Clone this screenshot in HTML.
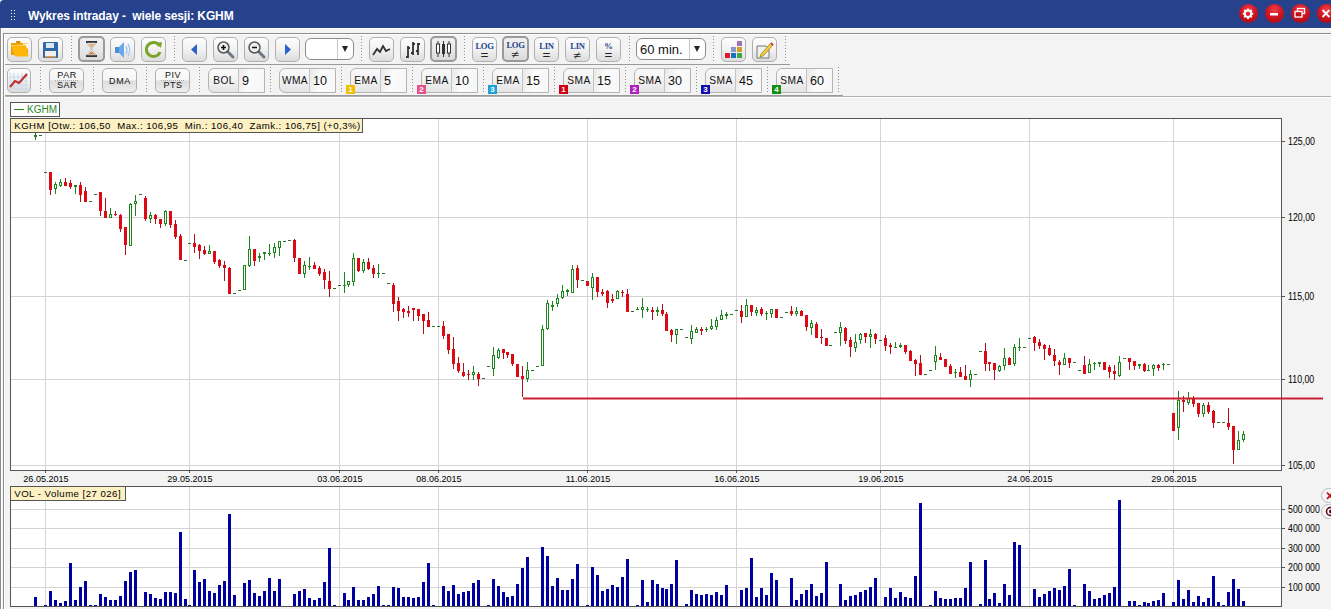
<!DOCTYPE html><html><head><meta charset="utf-8"><title>Wykres intraday</title><style>
*{margin:0;padding:0;box-sizing:border-box}
html,body{width:1331px;height:609px;overflow:hidden;background:#f3f3f3;font-family:"Liberation Sans",sans-serif}
#root{position:relative;width:1331px;height:609px;overflow:hidden;background:#f3f3f3}
.abs{position:absolute}
#title{position:absolute;left:0;top:0;width:1331px;height:28px;background:#26428c;border-top-left-radius:4px}
#corner{position:absolute;left:0;top:0;width:6px;height:6px;background:#eef}
#title .tt{position:absolute;left:28px;top:8.5px;font-size:12px;line-height:14px;font-weight:bold;color:#fff;white-space:pre;letter-spacing:-0.12px}
.grip{position:absolute;width:1px;height:1px;background:#fff}
.wb{position:absolute;top:4.2px;width:19px;height:19px;border-radius:50%;background:radial-gradient(circle at 50% 30%,#f04048 0%,#d01622 45%,#b00c18 80%,#d83848 92%,#e86070 100%)}
.wbi{position:absolute;left:0;top:0}
.hl{position:absolute;height:1px}
.vl{position:absolute;width:1px}
.btn{position:absolute;border:1px solid #b0b0b0;border-radius:5px;background:linear-gradient(#fdfdfd,#f3f3f3 45%,#dcdcdc);overflow:hidden}
.btn svg{position:absolute;left:-1px;top:-1px}
.dots{position:absolute;left:5px;right:5px;top:11px;height:1px;background:repeating-linear-gradient(90deg,#aaa 0 1px,transparent 1px 2px)}
.btn.b2{background:linear-gradient(#fbfbfb,#f6f6f6 48%,#dcdcdc 52%,#e4e4e4 75%,#ededed)}
.btn.pressed{border:2px solid #9a9a9a;background:linear-gradient(#f0f0f0,#e8e8e8 50%,#dadada)}
.btn.pressed svg{left:-2px;top:-2px}
.sep{position:absolute;width:1px;background:repeating-linear-gradient(#909090 0 1px,transparent 1px 3px)}
.dd{position:absolute;top:38px;height:22px;border:1px solid #8c8c8c;border-radius:6px;background:#fff}
.ddv{position:absolute;top:0;width:1px;height:20px;background:#c8c8c8}
.dda{position:absolute;top:7px;width:0;height:0;border-left:3.5px solid transparent;border-right:3.5px solid transparent;border-top:6.5px solid #222}
.ddt{position:absolute;left:3px;top:3px;font-size:13px;color:#111}
.lt{position:absolute;left:0;width:100%;top:3px;text-align:center;font-family:"Liberation Serif",serif;font-size:8.6px;line-height:10px;font-weight:bold;color:#22448e;letter-spacing:-0.3px}
.lb{position:absolute;left:0;width:100%;top:10.5px;text-align:center;font-size:13.5px;line-height:14px;color:#222;transform:scaleY(0.8)}
.pressed .lt{top:2px}.pressed .lb{top:9.5px}
.t2{position:absolute;left:0.5px;width:100%;top:1px;text-align:center;font-size:9px;line-height:10.3px;color:#111;letter-spacing:0.5px}
.t1{position:absolute;left:0.5px;width:100%;top:7px;text-align:center;font-size:9px;line-height:11px;color:#111;letter-spacing:0.6px}
.grp{position:absolute;top:68px;width:57px;height:25px;border:1px solid #b4b4b4;border-radius:6px 0 0 6px;background:linear-gradient(#fafafa,#f1f1f1 50%,#e4e4e4);overflow:hidden}
.gl{position:absolute;left:0;top:0;width:30px;height:23px;border-right:1px solid #c4c4c4;text-align:center;font-size:10.2px;line-height:24px;color:#111;letter-spacing:0.4px;padding-left:1px}
.gv{position:absolute;left:30px;top:0;width:26px;height:23px;background:linear-gradient(100deg,#e8e8e8,#fbfbfb 40%,#f6f6f6);font-size:12.6px;line-height:24px;padding-left:3px;color:#111}
.badge{position:absolute;top:85px;width:9px;height:9px;color:#fff;font-size:8px;line-height:9px;text-align:center;font-weight:bold}
.yl{position:absolute;left:1287.5px;font-size:10px;line-height:12px;color:#000;white-space:pre;transform:scaleX(0.88);transform-origin:0 0}
.xl{position:absolute;top:472.8px;width:80px;text-align:center;font-size:9.8px;line-height:12px;color:#000;transform:scaleX(0.925)}
.tip{position:absolute;background:#fdf1c4;border:1px solid #555;font-size:9.6px;line-height:12px;color:#000;white-space:pre;padding-left:3.3px;padding-top:1px;letter-spacing:0.48px}
#legend{position:absolute;left:10px;top:102px;width:50px;height:15px;border:1px solid #555;background:#fff;font-size:10px;line-height:13px;color:#1f8a1f;white-space:pre}
</style></head><body><div id="root">
<div id="corner"></div><div id="title"><span class="tt">Wykres intraday -  wiele sesji: KGHM</span></div>
<div class="grip" style="left:11px;top:10px"></div>
<div class="grip" style="left:11px;top:13px"></div>
<div class="grip" style="left:11px;top:16px"></div>
<div class="grip" style="left:11px;top:19px"></div>
<div class="grip" style="left:14px;top:10px"></div>
<div class="grip" style="left:14px;top:13px"></div>
<div class="grip" style="left:14px;top:16px"></div>
<div class="grip" style="left:14px;top:19px"></div>
<div class="wb" style="left:1238.5px"></div>
<div class="wb" style="left:1264.5px"></div>
<div class="wb" style="left:1290.5px"></div>
<div class="wb" style="left:1316.5px"></div>
<svg class="wbi" width="1331" height="28" viewBox="0 0 1331 28"><path d="M1250.5 13.7 L1253.2 13.7 M1249.8 15.5 L1251.7 17.4 M1248.0 16.2 L1248.0 18.9 M1246.2 15.5 L1244.3 17.4 M1245.5 13.7 L1242.8 13.7 M1246.2 11.9 L1244.3 10.0 M1248.0 11.2 L1248.0 8.5 M1249.8 11.9 L1251.7 10.0" stroke="#fff" stroke-width="2"/><circle cx="1248" cy="13.7" r="3.2" fill="none" stroke="#fff" stroke-width="1.8"/><rect x="1270" y="13" width="8" height="2.5" fill="#fff"/><rect x="1297.5" y="8.5" width="7" height="5" fill="none" stroke="#fff" stroke-width="1.3"/><rect x="1295" y="11.5" width="7" height="5.5" fill="#c0101a" stroke="#fff" stroke-width="1.3"/><path d="M1322.5 10 L1329.5 17 M1329.5 10 L1322.5 17" stroke="#fff" stroke-width="1.8"/></svg>
<div class="hl" style="left:0;top:28px;width:1331px;background:#fff"></div>
<div class="vl" style="left:0;top:28px;height:581px;background:#8c8c8c"></div>
<div class="vl" style="left:1px;top:29px;height:580px;background:#fff"></div>
<div class="hl" style="left:3px;top:33px;width:1328px;background:#8e8e8e"></div>
<div class="hl" style="left:4px;top:34px;width:1327px;background:#fff"></div>
<div class="hl" style="left:3px;top:64px;width:787px;background:#9a9a9a"></div>
<div class="hl" style="left:3px;top:95px;width:840px;background:#9a9a9a"></div>
<div class="hl" style="left:3px;top:96px;width:1328px;background:#b0b0b0"></div>
<div class="hl" style="left:4px;top:97px;width:1327px;background:#fff"></div>
<div class="vl" style="left:3px;top:33px;height:576px;background:#909090"></div>
<div class="vl" style="left:4px;top:34px;height:575px;background:#fff"></div>
<div class="btn" style="left:7px;top:37px;width:25px;height:25px"><svg width="25" height="25" viewBox="0 0 25 25"><rect x="9" y="4" width="4.5" height="2" rx="0.8" fill="#d98a00"/><path d="M4 6 h17 v12 h-17z" fill="#eea000"/><path d="M16 6.5 h5 v5 h-5z" fill="#fff"/><path d="M4 8.5 L19 8 L21.5 19.5 L8 19.5z" fill="#ffb60a"/><path d="M4 8.5 L19 8" stroke="#ffd460" stroke-width="1"/></svg></div>
<div class="btn" style="left:38px;top:37px;width:25px;height:25px"><svg width="25" height="25" viewBox="0 0 25 25"><rect x="5" y="5" width="15" height="16" rx="1" fill="#2f6aa8"/><rect x="8" y="6" width="8" height="5" fill="#dfe6ee"/><rect x="7" y="14" width="11" height="6" fill="#f1efe8"/><rect x="7" y="19" width="11" height="1.5" fill="#e39a52"/></svg></div>
<div class="sep" style="left:71px;top:36px;height:27px"></div>
<div class="btn pressed" style="left:78px;top:36px;width:27px;height:26px"><svg width="27" height="26" viewBox="0 0 27 26"><rect x="8" y="5" width="11" height="2" fill="#333"/><rect x="8" y="19" width="11" height="2" fill="#333"/><path d="M9 7 L18 7 L13.5 13 L18 19 L9 19 L13.5 13z" fill="#fafafa" stroke="#9aa" stroke-width="0.7"/><path d="M10 8 L17 8 L13.5 12z" fill="#e8b07a"/><path d="M10 18.5 L17 18.5 L13.5 15z" fill="#d9874a"/></svg></div>
<div class="btn" style="left:110px;top:37px;width:25px;height:25px"><svg width="25" height="25" viewBox="0 0 25 25"><rect x="5" y="10" width="4" height="6" fill="#4a8fd6"/><path d="M9 10 L14 5 L14 21 L9 16z" fill="#6aa8e8"/><path d="M16 9 q2 4 0 8 M18 7 q3.5 6 0 12" fill="none" stroke="#9cc6ee" stroke-width="1.2"/></svg></div>
<div class="btn" style="left:141px;top:37px;width:25px;height:25px"><svg width="25" height="25" viewBox="0 0 25 25"><path d="M18.5 9 A7 7 0 1 0 19 15" fill="none" stroke="#7aa52a" stroke-width="3"/><path d="M15 6 L21 5 L20 11z" fill="#7aa52a"/></svg></div>
<div class="sep" style="left:174px;top:36px;height:27px"></div>
<div class="btn" style="left:182px;top:37px;width:25px;height:25px"><svg width="25" height="25" viewBox="0 0 25 25"><path d="M15 7 L9 12.5 L15 18z" fill="#2a62c8"/></svg></div>
<div class="btn" style="left:213px;top:37px;width:25px;height:25px"><svg width="25" height="25" viewBox="0 0 25 25"><path d="M14 14 L20 20" stroke="#6d7a85" stroke-width="3" stroke-linecap="round"/><circle cx="10.5" cy="10.5" r="5.5" fill="#eee" stroke="#555" stroke-width="1.5"/><path d="M8 10.5 h5 M10.5 8 v5" stroke="#111" stroke-width="1.6"/></svg></div>
<div class="btn" style="left:244px;top:37px;width:25px;height:25px"><svg width="25" height="25" viewBox="0 0 25 25"><path d="M14 14 L20 20" stroke="#6d7a85" stroke-width="3" stroke-linecap="round"/><circle cx="10.5" cy="10.5" r="5.5" fill="#eee" stroke="#555" stroke-width="1.5"/><path d="M8 10.5 h5" stroke="#111" stroke-width="1.6"/></svg></div>
<div class="btn" style="left:275px;top:37px;width:25px;height:25px"><svg width="25" height="25" viewBox="0 0 25 25"><path d="M10 7 L16 12.5 L10 18z" fill="#2a62c8"/></svg></div>
<div class="dd" style="left:305px;width:49px"><div class="ddv" style="left:31px"></div><div class="dda" style="left:36px"></div></div>
<div class="sep" style="left:361px;top:36px;height:27px"></div>
<div class="btn" style="left:369px;top:37px;width:25px;height:25px"><svg width="25" height="25" viewBox="0 0 25 25"><path d="M4 18 L8 12 L11 15 L14 9 L17 14 L21 12" fill="none" stroke="#333" stroke-width="1.8"/></svg></div>
<div class="btn" style="left:400px;top:37px;width:25px;height:25px"><svg width="25" height="25" viewBox="0 0 25 25"><path d="M8 9 v12 M6 20 h2 M8 11 h2 M13 5 v13 M11 16 h2 M13 7 h2 M18 6 v12 M16 14 h2 M18 7 h2" fill="none" stroke="#333" stroke-width="1.8"/></svg></div>
<div class="btn pressed" style="left:430px;top:36px;width:27px;height:26px"><svg width="27" height="26" viewBox="0 0 27 26"><path d="M8 5 v16 M13.5 5 v16 M19 5 v16" stroke="#333" stroke-width="1"/><rect x="6.5" y="8" width="3" height="9" fill="#fff" stroke="#333" stroke-width="1"/><rect x="12" y="8" width="3" height="10" fill="#333"/><rect x="17.5" y="8" width="3" height="9" fill="#fff" stroke="#333" stroke-width="1"/></svg></div>
<div class="sep" style="left:464px;top:36px;height:27px"></div>
<div class="btn" style="left:472px;top:37px;width:25px;height:25px"><div class="lt">LOG</div><div class="lb">=</div></div>
<div class="btn pressed" style="left:502px;top:36px;width:27px;height:26px"><div class="lt">LOG</div><div class="lb">&#8800;</div></div>
<div class="btn" style="left:534px;top:37px;width:25px;height:25px"><div class="lt">LIN</div><div class="lb">=</div></div>
<div class="btn" style="left:565px;top:37px;width:25px;height:25px"><div class="lt">LIN</div><div class="lb">&#8800;</div></div>
<div class="btn" style="left:596px;top:37px;width:25px;height:25px"><div class="lt">%</div><div class="lb">=</div></div>
<div class="sep" style="left:629px;top:36px;height:27px"></div>
<div class="dd" style="left:636px;width:70px"><span class="ddt">60 min.</span><div class="ddv" style="left:52px"></div><div class="dda" style="left:57px"></div></div>
<div class="sep" style="left:713px;top:36px;height:27px"></div>
<div class="btn" style="left:721px;top:37px;width:25px;height:25px"><svg width="25" height="25" viewBox="0 0 25 25"><rect x="16" y="4" width="5" height="5" fill="#a070b8"/><rect x="10" y="10" width="5" height="5" fill="#8898cc"/><rect x="16" y="10" width="5" height="5" fill="#d0a020"/><rect x="4" y="16" width="5" height="5" fill="#e01828"/><rect x="10" y="16" width="5" height="5" fill="#1a70c0"/><rect x="16" y="16" width="5" height="5" fill="#38a848"/></svg></div>
<div class="btn" style="left:752px;top:37px;width:25px;height:25px"><svg width="25" height="25" viewBox="0 0 25 25"><path d="M5 9 h9 l3 3 v9 h-12z" fill="#f0f0f0" stroke="#777" stroke-width="1"/><path d="M9 17 L19 6 L21 8 L11 19 L8 20z" fill="#f2d23a" stroke="#9a7a10" stroke-width="0.8"/><path d="M19 6 L21 8" stroke="#d04040" stroke-width="2"/></svg></div>
<div class="sep" style="left:785px;top:36px;height:27px"></div>
<div class="btn" style="left:7px;top:68px;width:24px;height:25px"><svg width="24" height="25" viewBox="0 0 24 25"><g stroke="#c8d8e8" stroke-width="1"><path d="M3 5 v17 M7 5 v17 M11 5 v17 M15 5 v17 M19 5 v17 M3 9 h18 M3 13 h18 M3 17 h18 M3 21 h18"/></g><path d="M3 19 L8 13 L12 15 L20 6" fill="none" stroke="#c03030" stroke-width="2.2"/></svg></div>
<div class="sep" style="left:40px;top:67px;height:27px"></div>
<div class="btn b2" style="left:49px;top:68px;width:35px;height:25px"><div class="dots"></div><div class="t2">PAR<br>SAR</div></div>
<div class="sep" style="left:93px;top:67px;height:27px"></div>
<div class="btn b2" style="left:102px;top:68px;width:35px;height:25px"><div class="t1">DMA</div></div>
<div class="sep" style="left:146px;top:67px;height:27px"></div>
<div class="btn b2" style="left:155px;top:68px;width:35px;height:25px"><div class="dots"></div><div class="t2">PIV<br>PTS</div></div>
<div class="sep" style="left:199px;top:67px;height:27px"></div>
<div class="grp" style="left:208px"><div class="gl">BOL</div><div class="gv">9</div></div>
<div class="sep" style="left:270px;top:67px;height:27px"></div>
<div class="grp" style="left:279px"><div class="gl">WMA</div><div class="gv">10</div></div>
<div class="sep" style="left:341px;top:67px;height:27px"></div>
<div class="grp" style="left:350px"><div class="gl">EMA</div><div class="gv">5</div></div>
<div class="badge" style="left:346px;background:#f0c000">1</div>
<div class="sep" style="left:412px;top:67px;height:27px"></div>
<div class="grp" style="left:421px"><div class="gl">EMA</div><div class="gv">10</div></div>
<div class="badge" style="left:417px;background:#e8508a">2</div>
<div class="sep" style="left:483px;top:67px;height:27px"></div>
<div class="grp" style="left:492px"><div class="gl">EMA</div><div class="gv">15</div></div>
<div class="badge" style="left:488px;background:#20a0d8">3</div>
<div class="sep" style="left:554px;top:67px;height:27px"></div>
<div class="grp" style="left:563px"><div class="gl">SMA</div><div class="gv">15</div></div>
<div class="badge" style="left:559px;background:#d00010">1</div>
<div class="sep" style="left:625px;top:67px;height:27px"></div>
<div class="grp" style="left:634px"><div class="gl">SMA</div><div class="gv">30</div></div>
<div class="badge" style="left:630px;background:#b020c0">2</div>
<div class="sep" style="left:696px;top:67px;height:27px"></div>
<div class="grp" style="left:705px"><div class="gl">SMA</div><div class="gv">45</div></div>
<div class="badge" style="left:701px;background:#1010b0">3</div>
<div class="sep" style="left:767px;top:67px;height:27px"></div>
<div class="grp" style="left:776px"><div class="gl">SMA</div><div class="gv">60</div></div>
<div class="badge" style="left:772px;background:#109010">4</div>
<div class="sep" style="left:838px;top:67px;height:27px"></div>
<svg class="abs" style="left:0;top:0" width="1331" height="609" viewBox="0 0 1331 609"><rect x="10.5" y="118.5" width="1271" height="352" fill="#fff" stroke="#555" stroke-width="1"/>
<line x1="45.5" y1="119" x2="45.5" y2="470" stroke="#d4d4d4" stroke-width="1"/>
<line x1="45.5" y1="470" x2="45.5" y2="473" stroke="#555" stroke-width="1"/>
<line x1="189.5" y1="119" x2="189.5" y2="470" stroke="#d4d4d4" stroke-width="1"/>
<line x1="189.5" y1="470" x2="189.5" y2="473" stroke="#555" stroke-width="1"/>
<line x1="339.5" y1="119" x2="339.5" y2="470" stroke="#d4d4d4" stroke-width="1"/>
<line x1="339.5" y1="470" x2="339.5" y2="473" stroke="#555" stroke-width="1"/>
<line x1="438.5" y1="119" x2="438.5" y2="470" stroke="#d4d4d4" stroke-width="1"/>
<line x1="438.5" y1="470" x2="438.5" y2="473" stroke="#555" stroke-width="1"/>
<line x1="587.5" y1="119" x2="587.5" y2="470" stroke="#d4d4d4" stroke-width="1"/>
<line x1="587.5" y1="470" x2="587.5" y2="473" stroke="#555" stroke-width="1"/>
<line x1="736.5" y1="119" x2="736.5" y2="470" stroke="#d4d4d4" stroke-width="1"/>
<line x1="736.5" y1="470" x2="736.5" y2="473" stroke="#555" stroke-width="1"/>
<line x1="880.5" y1="119" x2="880.5" y2="470" stroke="#d4d4d4" stroke-width="1"/>
<line x1="880.5" y1="470" x2="880.5" y2="473" stroke="#555" stroke-width="1"/>
<line x1="1029.5" y1="119" x2="1029.5" y2="470" stroke="#d4d4d4" stroke-width="1"/>
<line x1="1029.5" y1="470" x2="1029.5" y2="473" stroke="#555" stroke-width="1"/>
<line x1="1173.5" y1="119" x2="1173.5" y2="470" stroke="#d4d4d4" stroke-width="1"/>
<line x1="1173.5" y1="470" x2="1173.5" y2="473" stroke="#555" stroke-width="1"/>
<line x1="11" y1="141.5" x2="1281" y2="141.5" stroke="#d4d4d4" stroke-width="1"/>
<line x1="1281" y1="141.5" x2="1285" y2="141.5" stroke="#555" stroke-width="1"/>
<line x1="11" y1="217.5" x2="1281" y2="217.5" stroke="#d4d4d4" stroke-width="1"/>
<line x1="1281" y1="217.5" x2="1285" y2="217.5" stroke="#555" stroke-width="1"/>
<line x1="11" y1="296.5" x2="1281" y2="296.5" stroke="#d4d4d4" stroke-width="1"/>
<line x1="1281" y1="296.5" x2="1285" y2="296.5" stroke="#555" stroke-width="1"/>
<line x1="11" y1="379.5" x2="1281" y2="379.5" stroke="#d4d4d4" stroke-width="1"/>
<line x1="1281" y1="379.5" x2="1285" y2="379.5" stroke="#555" stroke-width="1"/>
<line x1="11" y1="465.5" x2="1281" y2="465.5" stroke="#d4d4d4" stroke-width="1"/>
<line x1="1281" y1="465.5" x2="1285" y2="465.5" stroke="#555" stroke-width="1"/>
<rect x="10.5" y="486.5" width="1271" height="120" fill="#fff" stroke="#555" stroke-width="1"/>
<line x1="45.5" y1="487" x2="45.5" y2="606" stroke="#d4d4d4" stroke-width="1"/>
<line x1="189.5" y1="487" x2="189.5" y2="606" stroke="#d4d4d4" stroke-width="1"/>
<line x1="339.5" y1="487" x2="339.5" y2="606" stroke="#d4d4d4" stroke-width="1"/>
<line x1="438.5" y1="487" x2="438.5" y2="606" stroke="#d4d4d4" stroke-width="1"/>
<line x1="587.5" y1="487" x2="587.5" y2="606" stroke="#d4d4d4" stroke-width="1"/>
<line x1="736.5" y1="487" x2="736.5" y2="606" stroke="#d4d4d4" stroke-width="1"/>
<line x1="880.5" y1="487" x2="880.5" y2="606" stroke="#d4d4d4" stroke-width="1"/>
<line x1="1029.5" y1="487" x2="1029.5" y2="606" stroke="#d4d4d4" stroke-width="1"/>
<line x1="1173.5" y1="487" x2="1173.5" y2="606" stroke="#d4d4d4" stroke-width="1"/>
<line x1="11" y1="587.5" x2="1281" y2="587.5" stroke="#d4d4d4" stroke-width="1"/>
<line x1="1281" y1="587.5" x2="1285" y2="587.5" stroke="#555" stroke-width="1"/>
<line x1="11" y1="567.5" x2="1281" y2="567.5" stroke="#d4d4d4" stroke-width="1"/>
<line x1="1281" y1="567.5" x2="1285" y2="567.5" stroke="#555" stroke-width="1"/>
<line x1="11" y1="548.5" x2="1281" y2="548.5" stroke="#d4d4d4" stroke-width="1"/>
<line x1="1281" y1="548.5" x2="1285" y2="548.5" stroke="#555" stroke-width="1"/>
<line x1="11" y1="528.5" x2="1281" y2="528.5" stroke="#d4d4d4" stroke-width="1"/>
<line x1="1281" y1="528.5" x2="1285" y2="528.5" stroke="#555" stroke-width="1"/>
<line x1="11" y1="509.5" x2="1281" y2="509.5" stroke="#d4d4d4" stroke-width="1"/>
<line x1="1281" y1="509.5" x2="1285" y2="509.5" stroke="#555" stroke-width="1"/>
<g shape-rendering="crispEdges">
<rect x="34" y="597" width="3" height="9" fill="#0000a0"/>
<rect x="44" y="605" width="3" height="1" fill="#0000a0"/>
<rect x="49" y="591" width="3" height="15" fill="#0000a0"/>
<rect x="54" y="600" width="3" height="6" fill="#0000a0"/>
<rect x="59" y="603" width="3" height="3" fill="#0000a0"/>
<rect x="64" y="601" width="3" height="5" fill="#0000a0"/>
<rect x="69" y="563" width="3" height="43" fill="#0000a0"/>
<rect x="74" y="600" width="3" height="6" fill="#0000a0"/>
<rect x="79" y="587" width="3" height="19" fill="#0000a0"/>
<rect x="84" y="581" width="3" height="25" fill="#0000a0"/>
<rect x="89" y="605" width="3" height="1" fill="#0000a0"/>
<rect x="94" y="605" width="3" height="1" fill="#0000a0"/>
<rect x="99" y="594" width="3" height="12" fill="#0000a0"/>
<rect x="104" y="597" width="3" height="9" fill="#0000a0"/>
<rect x="109" y="600" width="3" height="6" fill="#0000a0"/>
<rect x="114" y="600" width="3" height="6" fill="#0000a0"/>
<rect x="119" y="596" width="3" height="10" fill="#0000a0"/>
<rect x="124" y="581" width="3" height="25" fill="#0000a0"/>
<rect x="129" y="572" width="3" height="34" fill="#0000a0"/>
<rect x="134" y="570" width="3" height="36" fill="#0000a0"/>
<rect x="144" y="592" width="3" height="14" fill="#0000a0"/>
<rect x="149" y="594" width="3" height="12" fill="#0000a0"/>
<rect x="154" y="598" width="3" height="8" fill="#0000a0"/>
<rect x="159" y="599" width="3" height="7" fill="#0000a0"/>
<rect x="164" y="592" width="3" height="14" fill="#0000a0"/>
<rect x="169" y="592" width="3" height="14" fill="#0000a0"/>
<rect x="174" y="593" width="3" height="13" fill="#0000a0"/>
<rect x="179" y="532" width="3" height="74" fill="#0000a0"/>
<rect x="184" y="599" width="3" height="7" fill="#0000a0"/>
<rect x="188" y="605" width="3" height="1" fill="#0000a0"/>
<rect x="193" y="570" width="3" height="36" fill="#0000a0"/>
<rect x="198" y="582" width="3" height="24" fill="#0000a0"/>
<rect x="203" y="579" width="3" height="27" fill="#0000a0"/>
<rect x="208" y="591" width="3" height="15" fill="#0000a0"/>
<rect x="213" y="593" width="3" height="13" fill="#0000a0"/>
<rect x="218" y="585" width="3" height="21" fill="#0000a0"/>
<rect x="223" y="581" width="3" height="25" fill="#0000a0"/>
<rect x="228" y="514" width="3" height="92" fill="#0000a0"/>
<rect x="233" y="595" width="3" height="11" fill="#0000a0"/>
<rect x="243" y="583" width="3" height="23" fill="#0000a0"/>
<rect x="248" y="580" width="3" height="26" fill="#0000a0"/>
<rect x="253" y="593" width="3" height="13" fill="#0000a0"/>
<rect x="258" y="596" width="3" height="10" fill="#0000a0"/>
<rect x="263" y="591" width="3" height="15" fill="#0000a0"/>
<rect x="268" y="578" width="3" height="28" fill="#0000a0"/>
<rect x="273" y="591" width="3" height="15" fill="#0000a0"/>
<rect x="278" y="579" width="3" height="27" fill="#0000a0"/>
<rect x="293" y="594" width="3" height="12" fill="#0000a0"/>
<rect x="298" y="591" width="3" height="15" fill="#0000a0"/>
<rect x="303" y="589" width="3" height="17" fill="#0000a0"/>
<rect x="308" y="598" width="3" height="8" fill="#0000a0"/>
<rect x="313" y="600" width="3" height="6" fill="#0000a0"/>
<rect x="318" y="598" width="3" height="8" fill="#0000a0"/>
<rect x="323" y="582" width="3" height="24" fill="#0000a0"/>
<rect x="328" y="548" width="3" height="58" fill="#0000a0"/>
<rect x="333" y="605" width="3" height="1" fill="#0000a0"/>
<rect x="343" y="593" width="3" height="13" fill="#0000a0"/>
<rect x="347" y="600" width="3" height="6" fill="#0000a0"/>
<rect x="352" y="587" width="3" height="19" fill="#0000a0"/>
<rect x="357" y="600" width="3" height="6" fill="#0000a0"/>
<rect x="362" y="600" width="3" height="6" fill="#0000a0"/>
<rect x="367" y="597" width="3" height="9" fill="#0000a0"/>
<rect x="372" y="594" width="3" height="12" fill="#0000a0"/>
<rect x="377" y="586" width="3" height="20" fill="#0000a0"/>
<rect x="382" y="605" width="3" height="1" fill="#0000a0"/>
<rect x="387" y="605" width="3" height="1" fill="#0000a0"/>
<rect x="392" y="587" width="3" height="19" fill="#0000a0"/>
<rect x="397" y="588" width="3" height="18" fill="#0000a0"/>
<rect x="402" y="597" width="3" height="9" fill="#0000a0"/>
<rect x="407" y="597" width="3" height="9" fill="#0000a0"/>
<rect x="412" y="598" width="3" height="8" fill="#0000a0"/>
<rect x="417" y="597" width="3" height="9" fill="#0000a0"/>
<rect x="422" y="582" width="3" height="24" fill="#0000a0"/>
<rect x="427" y="563" width="3" height="43" fill="#0000a0"/>
<rect x="432" y="605" width="3" height="1" fill="#0000a0"/>
<rect x="442" y="586" width="3" height="20" fill="#0000a0"/>
<rect x="447" y="591" width="3" height="15" fill="#0000a0"/>
<rect x="452" y="585" width="3" height="21" fill="#0000a0"/>
<rect x="457" y="594" width="3" height="12" fill="#0000a0"/>
<rect x="462" y="592" width="3" height="14" fill="#0000a0"/>
<rect x="467" y="591" width="3" height="15" fill="#0000a0"/>
<rect x="472" y="583" width="3" height="23" fill="#0000a0"/>
<rect x="477" y="580" width="3" height="26" fill="#0000a0"/>
<rect x="487" y="605" width="3" height="1" fill="#0000a0"/>
<rect x="492" y="579" width="3" height="27" fill="#0000a0"/>
<rect x="497" y="586" width="3" height="20" fill="#0000a0"/>
<rect x="502" y="592" width="3" height="14" fill="#0000a0"/>
<rect x="506" y="597" width="3" height="9" fill="#0000a0"/>
<rect x="511" y="596" width="3" height="10" fill="#0000a0"/>
<rect x="516" y="584" width="3" height="22" fill="#0000a0"/>
<rect x="521" y="568" width="3" height="38" fill="#0000a0"/>
<rect x="526" y="557" width="3" height="49" fill="#0000a0"/>
<rect x="541" y="547" width="3" height="59" fill="#0000a0"/>
<rect x="546" y="556" width="3" height="50" fill="#0000a0"/>
<rect x="551" y="586" width="3" height="20" fill="#0000a0"/>
<rect x="556" y="578" width="3" height="28" fill="#0000a0"/>
<rect x="561" y="590" width="3" height="16" fill="#0000a0"/>
<rect x="566" y="590" width="3" height="16" fill="#0000a0"/>
<rect x="571" y="579" width="3" height="27" fill="#0000a0"/>
<rect x="576" y="564" width="3" height="42" fill="#0000a0"/>
<rect x="586" y="605" width="3" height="1" fill="#0000a0"/>
<rect x="591" y="567" width="3" height="39" fill="#0000a0"/>
<rect x="596" y="575" width="3" height="31" fill="#0000a0"/>
<rect x="601" y="591" width="3" height="15" fill="#0000a0"/>
<rect x="606" y="589" width="3" height="17" fill="#0000a0"/>
<rect x="611" y="585" width="3" height="21" fill="#0000a0"/>
<rect x="616" y="587" width="3" height="19" fill="#0000a0"/>
<rect x="621" y="577" width="3" height="29" fill="#0000a0"/>
<rect x="626" y="559" width="3" height="47" fill="#0000a0"/>
<rect x="636" y="605" width="3" height="1" fill="#0000a0"/>
<rect x="641" y="580" width="3" height="26" fill="#0000a0"/>
<rect x="646" y="602" width="3" height="4" fill="#0000a0"/>
<rect x="651" y="580" width="3" height="26" fill="#0000a0"/>
<rect x="656" y="584" width="3" height="22" fill="#0000a0"/>
<rect x="661" y="588" width="3" height="18" fill="#0000a0"/>
<rect x="665" y="589" width="3" height="17" fill="#0000a0"/>
<rect x="670" y="584" width="3" height="22" fill="#0000a0"/>
<rect x="675" y="560" width="3" height="46" fill="#0000a0"/>
<rect x="685" y="604" width="3" height="2" fill="#0000a0"/>
<rect x="690" y="590" width="3" height="16" fill="#0000a0"/>
<rect x="695" y="594" width="3" height="12" fill="#0000a0"/>
<rect x="700" y="595" width="3" height="11" fill="#0000a0"/>
<rect x="705" y="594" width="3" height="12" fill="#0000a0"/>
<rect x="710" y="595" width="3" height="11" fill="#0000a0"/>
<rect x="715" y="592" width="3" height="14" fill="#0000a0"/>
<rect x="720" y="595" width="3" height="11" fill="#0000a0"/>
<rect x="725" y="585" width="3" height="21" fill="#0000a0"/>
<rect x="740" y="590" width="3" height="16" fill="#0000a0"/>
<rect x="745" y="588" width="3" height="18" fill="#0000a0"/>
<rect x="750" y="558" width="3" height="48" fill="#0000a0"/>
<rect x="755" y="597" width="3" height="9" fill="#0000a0"/>
<rect x="760" y="588" width="3" height="18" fill="#0000a0"/>
<rect x="765" y="595" width="3" height="11" fill="#0000a0"/>
<rect x="770" y="573" width="3" height="33" fill="#0000a0"/>
<rect x="775" y="580" width="3" height="26" fill="#0000a0"/>
<rect x="790" y="578" width="3" height="28" fill="#0000a0"/>
<rect x="795" y="600" width="3" height="6" fill="#0000a0"/>
<rect x="800" y="594" width="3" height="12" fill="#0000a0"/>
<rect x="805" y="590" width="3" height="16" fill="#0000a0"/>
<rect x="810" y="584" width="3" height="22" fill="#0000a0"/>
<rect x="815" y="596" width="3" height="10" fill="#0000a0"/>
<rect x="820" y="593" width="3" height="13" fill="#0000a0"/>
<rect x="825" y="562" width="3" height="44" fill="#0000a0"/>
<rect x="839" y="584" width="3" height="22" fill="#0000a0"/>
<rect x="844" y="600" width="3" height="6" fill="#0000a0"/>
<rect x="849" y="596" width="3" height="10" fill="#0000a0"/>
<rect x="854" y="595" width="3" height="11" fill="#0000a0"/>
<rect x="859" y="592" width="3" height="14" fill="#0000a0"/>
<rect x="864" y="590" width="3" height="16" fill="#0000a0"/>
<rect x="869" y="587" width="3" height="19" fill="#0000a0"/>
<rect x="874" y="578" width="3" height="28" fill="#0000a0"/>
<rect x="884" y="597" width="3" height="9" fill="#0000a0"/>
<rect x="889" y="588" width="3" height="18" fill="#0000a0"/>
<rect x="894" y="598" width="3" height="8" fill="#0000a0"/>
<rect x="899" y="592" width="3" height="14" fill="#0000a0"/>
<rect x="904" y="597" width="3" height="9" fill="#0000a0"/>
<rect x="909" y="598" width="3" height="8" fill="#0000a0"/>
<rect x="914" y="576" width="3" height="30" fill="#0000a0"/>
<rect x="919" y="503" width="3" height="103" fill="#0000a0"/>
<rect x="929" y="605" width="3" height="1" fill="#0000a0"/>
<rect x="934" y="591" width="3" height="15" fill="#0000a0"/>
<rect x="939" y="598" width="3" height="8" fill="#0000a0"/>
<rect x="944" y="599" width="3" height="7" fill="#0000a0"/>
<rect x="949" y="599" width="3" height="7" fill="#0000a0"/>
<rect x="954" y="598" width="3" height="8" fill="#0000a0"/>
<rect x="959" y="598" width="3" height="8" fill="#0000a0"/>
<rect x="964" y="588" width="3" height="18" fill="#0000a0"/>
<rect x="969" y="562" width="3" height="44" fill="#0000a0"/>
<rect x="979" y="604" width="3" height="2" fill="#0000a0"/>
<rect x="984" y="560" width="3" height="46" fill="#0000a0"/>
<rect x="988" y="599" width="3" height="7" fill="#0000a0"/>
<rect x="993" y="593" width="3" height="13" fill="#0000a0"/>
<rect x="998" y="603" width="3" height="3" fill="#0000a0"/>
<rect x="1003" y="584" width="3" height="22" fill="#0000a0"/>
<rect x="1008" y="595" width="3" height="11" fill="#0000a0"/>
<rect x="1013" y="542" width="3" height="64" fill="#0000a0"/>
<rect x="1018" y="545" width="3" height="61" fill="#0000a0"/>
<rect x="1033" y="589" width="3" height="17" fill="#0000a0"/>
<rect x="1038" y="597" width="3" height="9" fill="#0000a0"/>
<rect x="1043" y="594" width="3" height="12" fill="#0000a0"/>
<rect x="1048" y="591" width="3" height="15" fill="#0000a0"/>
<rect x="1053" y="588" width="3" height="18" fill="#0000a0"/>
<rect x="1058" y="590" width="3" height="16" fill="#0000a0"/>
<rect x="1063" y="586" width="3" height="20" fill="#0000a0"/>
<rect x="1068" y="569" width="3" height="37" fill="#0000a0"/>
<rect x="1073" y="605" width="3" height="1" fill="#0000a0"/>
<rect x="1083" y="584" width="3" height="22" fill="#0000a0"/>
<rect x="1088" y="591" width="3" height="15" fill="#0000a0"/>
<rect x="1093" y="599" width="3" height="7" fill="#0000a0"/>
<rect x="1098" y="598" width="3" height="8" fill="#0000a0"/>
<rect x="1103" y="595" width="3" height="11" fill="#0000a0"/>
<rect x="1108" y="593" width="3" height="13" fill="#0000a0"/>
<rect x="1113" y="587" width="3" height="19" fill="#0000a0"/>
<rect x="1118" y="500" width="3" height="106" fill="#0000a0"/>
<rect x="1128" y="601" width="3" height="5" fill="#0000a0"/>
<rect x="1133" y="601" width="3" height="5" fill="#0000a0"/>
<rect x="1138" y="605" width="3" height="1" fill="#0000a0"/>
<rect x="1143" y="602" width="3" height="4" fill="#0000a0"/>
<rect x="1147" y="603" width="3" height="3" fill="#0000a0"/>
<rect x="1152" y="601" width="3" height="5" fill="#0000a0"/>
<rect x="1157" y="600" width="3" height="6" fill="#0000a0"/>
<rect x="1162" y="593" width="3" height="13" fill="#0000a0"/>
<rect x="1172" y="602" width="3" height="4" fill="#0000a0"/>
<rect x="1177" y="580" width="3" height="26" fill="#0000a0"/>
<rect x="1182" y="599" width="3" height="7" fill="#0000a0"/>
<rect x="1187" y="590" width="3" height="16" fill="#0000a0"/>
<rect x="1192" y="602" width="3" height="4" fill="#0000a0"/>
<rect x="1197" y="596" width="3" height="10" fill="#0000a0"/>
<rect x="1202" y="602" width="3" height="4" fill="#0000a0"/>
<rect x="1207" y="598" width="3" height="8" fill="#0000a0"/>
<rect x="1212" y="576" width="3" height="30" fill="#0000a0"/>
<rect x="1217" y="602" width="3" height="4" fill="#0000a0"/>
<rect x="1222" y="605" width="3" height="1" fill="#0000a0"/>
<rect x="1227" y="592" width="3" height="14" fill="#0000a0"/>
<rect x="1232" y="579" width="3" height="27" fill="#0000a0"/>
<rect x="1237" y="589" width="3" height="17" fill="#0000a0"/>
<rect x="1242" y="601" width="3" height="5" fill="#0000a0"/>
<rect x="35" y="132" width="1" height="8" fill="#1e841e"/>
<rect x="34" y="135" width="3" height="2" fill="#1e841e"/>
<rect x="39" y="135" width="3" height="1" fill="#2e6e2e"/>
<rect x="44" y="172" width="3" height="1" fill="#2e6e2e"/>
<rect x="50" y="172" width="1" height="23" fill="#b0101a"/>
<rect x="49" y="172" width="3" height="18" fill="#dc0a14"/>
<rect x="55" y="182" width="1" height="12" fill="#1e841e"/>
<rect x="54.5" y="184.5" width="2" height="4" fill="#fff" stroke="#1e841e" stroke-width="1"/>
<rect x="60" y="179" width="1" height="8" fill="#1e841e"/>
<rect x="59.5" y="182.5" width="2" height="3" fill="#fff" stroke="#1e841e" stroke-width="1"/>
<rect x="65" y="178" width="1" height="8" fill="#b0101a"/>
<rect x="64" y="182" width="3" height="4" fill="#dc0a14"/>
<rect x="70" y="180" width="1" height="9" fill="#b0101a"/>
<rect x="69" y="183" width="3" height="4" fill="#dc0a14"/>
<rect x="75" y="185" width="1" height="9" fill="#1e841e"/>
<rect x="74" y="185" width="3" height="2" fill="#1e841e"/>
<rect x="80" y="182" width="1" height="20" fill="#b0101a"/>
<rect x="79" y="185" width="3" height="10" fill="#dc0a14"/>
<rect x="85" y="187" width="1" height="15" fill="#b0101a"/>
<rect x="84" y="191" width="3" height="11" fill="#dc0a14"/>
<rect x="89" y="201" width="3" height="1" fill="#2e6e2e"/>
<rect x="94" y="194" width="3" height="1" fill="#2e6e2e"/>
<rect x="100" y="192" width="1" height="24" fill="#b0101a"/>
<rect x="99" y="192" width="3" height="19" fill="#dc0a14"/>
<rect x="105" y="198" width="1" height="20" fill="#b0101a"/>
<rect x="104" y="211" width="3" height="7" fill="#dc0a14"/>
<rect x="110" y="208" width="1" height="10" fill="#1e841e"/>
<rect x="109.5" y="214.5" width="2" height="3" fill="#fff" stroke="#1e841e" stroke-width="1"/>
<rect x="115" y="211" width="1" height="5" fill="#b0101a"/>
<rect x="114" y="214" width="3" height="1" fill="#dc0a14"/>
<rect x="120" y="214" width="1" height="18" fill="#b0101a"/>
<rect x="119" y="215" width="3" height="14" fill="#dc0a14"/>
<rect x="125" y="227" width="1" height="28" fill="#b0101a"/>
<rect x="124" y="227" width="3" height="18" fill="#dc0a14"/>
<rect x="130" y="203" width="1" height="43" fill="#1e841e"/>
<rect x="129.5" y="204.5" width="2" height="41" fill="#fff" stroke="#1e841e" stroke-width="1"/>
<rect x="135" y="195" width="1" height="21" fill="#1e841e"/>
<rect x="134.5" y="201.5" width="2" height="2" fill="#fff" stroke="#1e841e" stroke-width="1"/>
<rect x="139" y="194" width="3" height="1" fill="#2e6e2e"/>
<rect x="145" y="196" width="1" height="25" fill="#b0101a"/>
<rect x="144" y="198" width="3" height="21" fill="#dc0a14"/>
<rect x="150" y="212" width="1" height="11" fill="#1e841e"/>
<rect x="149.5" y="215.5" width="2" height="3" fill="#fff" stroke="#1e841e" stroke-width="1"/>
<rect x="155" y="214" width="1" height="10" fill="#b0101a"/>
<rect x="154" y="215" width="3" height="4" fill="#dc0a14"/>
<rect x="160" y="219" width="1" height="9" fill="#b0101a"/>
<rect x="159" y="219" width="3" height="5" fill="#dc0a14"/>
<rect x="165" y="210" width="1" height="16" fill="#1e841e"/>
<rect x="164.5" y="211.5" width="2" height="12" fill="#fff" stroke="#1e841e" stroke-width="1"/>
<rect x="170" y="211" width="1" height="17" fill="#b0101a"/>
<rect x="169" y="211" width="3" height="14" fill="#dc0a14"/>
<rect x="175" y="220" width="1" height="19" fill="#b0101a"/>
<rect x="174" y="224" width="3" height="13" fill="#dc0a14"/>
<rect x="180" y="234" width="1" height="26" fill="#b0101a"/>
<rect x="179" y="236" width="3" height="24" fill="#dc0a14"/>
<rect x="184" y="260" width="3" height="1" fill="#2e6e2e"/>
<rect x="188" y="243" width="3" height="1" fill="#2e6e2e"/>
<rect x="194" y="234" width="1" height="19" fill="#b0101a"/>
<rect x="193" y="243" width="3" height="4" fill="#dc0a14"/>
<rect x="199" y="244" width="1" height="15" fill="#b0101a"/>
<rect x="198" y="245" width="3" height="6" fill="#dc0a14"/>
<rect x="204" y="246" width="1" height="9" fill="#b0101a"/>
<rect x="203" y="250" width="3" height="4" fill="#dc0a14"/>
<rect x="209" y="245" width="1" height="9" fill="#1e841e"/>
<rect x="208.5" y="251.5" width="2" height="2" fill="#fff" stroke="#1e841e" stroke-width="1"/>
<rect x="214" y="251" width="1" height="13" fill="#b0101a"/>
<rect x="213" y="251" width="3" height="11" fill="#dc0a14"/>
<rect x="219" y="259" width="1" height="9" fill="#b0101a"/>
<rect x="218" y="260" width="3" height="6" fill="#dc0a14"/>
<rect x="224" y="261" width="1" height="20" fill="#b0101a"/>
<rect x="223" y="265" width="3" height="3" fill="#dc0a14"/>
<rect x="229" y="267" width="1" height="27" fill="#b0101a"/>
<rect x="228" y="268" width="3" height="26" fill="#dc0a14"/>
<rect x="233" y="293" width="3" height="1" fill="#2e6e2e"/>
<rect x="238" y="290" width="3" height="1" fill="#2e6e2e"/>
<rect x="244" y="265" width="1" height="25" fill="#1e841e"/>
<rect x="243.5" y="265.5" width="2" height="24" fill="#fff" stroke="#1e841e" stroke-width="1"/>
<rect x="249" y="236" width="1" height="31" fill="#1e841e"/>
<rect x="248.5" y="249.5" width="2" height="16" fill="#fff" stroke="#1e841e" stroke-width="1"/>
<rect x="254" y="249" width="1" height="17" fill="#b0101a"/>
<rect x="253" y="249" width="3" height="12" fill="#dc0a14"/>
<rect x="259" y="253" width="1" height="9" fill="#1e841e"/>
<rect x="258" y="256" width="3" height="2" fill="#1e841e"/>
<rect x="264" y="252" width="1" height="8" fill="#1e841e"/>
<rect x="263" y="252" width="3" height="2" fill="#1e841e"/>
<rect x="269" y="244" width="1" height="12" fill="#1e841e"/>
<rect x="268" y="253" width="3" height="1" fill="#1e841e"/>
<rect x="274" y="243" width="1" height="15" fill="#1e841e"/>
<rect x="273.5" y="247.5" width="2" height="5" fill="#fff" stroke="#1e841e" stroke-width="1"/>
<rect x="279" y="241" width="1" height="15" fill="#1e841e"/>
<rect x="278.5" y="241.5" width="2" height="6" fill="#fff" stroke="#1e841e" stroke-width="1"/>
<rect x="283" y="241" width="3" height="1" fill="#2e6e2e"/>
<rect x="288" y="240" width="3" height="1" fill="#2e6e2e"/>
<rect x="294" y="239" width="1" height="23" fill="#b0101a"/>
<rect x="293" y="240" width="3" height="18" fill="#dc0a14"/>
<rect x="299" y="258" width="1" height="16" fill="#b0101a"/>
<rect x="298" y="258" width="3" height="16" fill="#dc0a14"/>
<rect x="304" y="261" width="1" height="17" fill="#1e841e"/>
<rect x="303.5" y="265.5" width="2" height="8" fill="#fff" stroke="#1e841e" stroke-width="1"/>
<rect x="309" y="257" width="1" height="13" fill="#1e841e"/>
<rect x="308" y="266" width="3" height="1" fill="#1e841e"/>
<rect x="314" y="262" width="1" height="7" fill="#b0101a"/>
<rect x="313" y="265" width="3" height="4" fill="#dc0a14"/>
<rect x="319" y="266" width="1" height="10" fill="#b0101a"/>
<rect x="318" y="268" width="3" height="6" fill="#dc0a14"/>
<rect x="324" y="269" width="1" height="20" fill="#b0101a"/>
<rect x="323" y="272" width="3" height="8" fill="#dc0a14"/>
<rect x="329" y="271" width="1" height="26" fill="#b0101a"/>
<rect x="328" y="281" width="3" height="8" fill="#dc0a14"/>
<rect x="333" y="288" width="3" height="1" fill="#2e6e2e"/>
<rect x="338" y="285" width="3" height="1" fill="#2e6e2e"/>
<rect x="344" y="272" width="1" height="21" fill="#1e841e"/>
<rect x="343" y="285" width="3" height="1" fill="#1e841e"/>
<rect x="348" y="281" width="1" height="6" fill="#1e841e"/>
<rect x="347.5" y="281.5" width="2" height="3" fill="#fff" stroke="#1e841e" stroke-width="1"/>
<rect x="353" y="253" width="1" height="33" fill="#1e841e"/>
<rect x="352.5" y="258.5" width="2" height="23" fill="#fff" stroke="#1e841e" stroke-width="1"/>
<rect x="358" y="258" width="1" height="14" fill="#b0101a"/>
<rect x="357" y="258" width="3" height="13" fill="#dc0a14"/>
<rect x="363" y="259" width="1" height="14" fill="#1e841e"/>
<rect x="362.5" y="262.5" width="2" height="8" fill="#fff" stroke="#1e841e" stroke-width="1"/>
<rect x="368" y="258" width="1" height="12" fill="#b0101a"/>
<rect x="367" y="262" width="3" height="7" fill="#dc0a14"/>
<rect x="373" y="265" width="1" height="13" fill="#b0101a"/>
<rect x="372" y="268" width="3" height="6" fill="#dc0a14"/>
<rect x="378" y="264" width="1" height="14" fill="#1e841e"/>
<rect x="377" y="273" width="3" height="1" fill="#1e841e"/>
<rect x="382" y="273" width="3" height="1" fill="#2e6e2e"/>
<rect x="387" y="283" width="3" height="1" fill="#2e6e2e"/>
<rect x="393" y="283" width="1" height="29" fill="#b0101a"/>
<rect x="392" y="285" width="3" height="19" fill="#dc0a14"/>
<rect x="398" y="297" width="1" height="24" fill="#b0101a"/>
<rect x="397" y="301" width="3" height="10" fill="#dc0a14"/>
<rect x="403" y="308" width="1" height="10" fill="#b0101a"/>
<rect x="402" y="309" width="3" height="3" fill="#dc0a14"/>
<rect x="408" y="306" width="1" height="11" fill="#b0101a"/>
<rect x="407" y="311" width="3" height="2" fill="#dc0a14"/>
<rect x="413" y="308" width="1" height="13" fill="#b0101a"/>
<rect x="412" y="308" width="3" height="2" fill="#dc0a14"/>
<rect x="418" y="309" width="1" height="12" fill="#b0101a"/>
<rect x="417" y="309" width="3" height="7" fill="#dc0a14"/>
<rect x="423" y="314" width="1" height="20" fill="#b0101a"/>
<rect x="422" y="314" width="3" height="7" fill="#dc0a14"/>
<rect x="428" y="312" width="1" height="15" fill="#b0101a"/>
<rect x="427" y="320" width="3" height="7" fill="#dc0a14"/>
<rect x="432" y="326" width="3" height="1" fill="#2e6e2e"/>
<rect x="437" y="326" width="3" height="1" fill="#2e6e2e"/>
<rect x="443" y="321" width="1" height="18" fill="#b0101a"/>
<rect x="442" y="326" width="3" height="10" fill="#dc0a14"/>
<rect x="448" y="334" width="1" height="20" fill="#b0101a"/>
<rect x="447" y="334" width="3" height="16" fill="#dc0a14"/>
<rect x="453" y="337" width="1" height="32" fill="#b0101a"/>
<rect x="452" y="349" width="3" height="15" fill="#dc0a14"/>
<rect x="458" y="357" width="1" height="16" fill="#b0101a"/>
<rect x="457" y="363" width="3" height="8" fill="#dc0a14"/>
<rect x="463" y="363" width="1" height="14" fill="#b0101a"/>
<rect x="462" y="372" width="3" height="4" fill="#dc0a14"/>
<rect x="468" y="370" width="1" height="10" fill="#b0101a"/>
<rect x="467" y="374" width="3" height="1" fill="#dc0a14"/>
<rect x="473" y="366" width="1" height="14" fill="#1e841e"/>
<rect x="472.5" y="372.5" width="2" height="2" fill="#fff" stroke="#1e841e" stroke-width="1"/>
<rect x="478" y="372" width="1" height="14" fill="#b0101a"/>
<rect x="477" y="374" width="3" height="5" fill="#dc0a14"/>
<rect x="482" y="378" width="3" height="1" fill="#2e6e2e"/>
<rect x="487" y="366" width="3" height="1" fill="#2e6e2e"/>
<rect x="493" y="347" width="1" height="29" fill="#1e841e"/>
<rect x="492.5" y="355.5" width="2" height="13" fill="#fff" stroke="#1e841e" stroke-width="1"/>
<rect x="498" y="348" width="1" height="11" fill="#1e841e"/>
<rect x="497.5" y="350.5" width="2" height="7" fill="#fff" stroke="#1e841e" stroke-width="1"/>
<rect x="503" y="349" width="1" height="10" fill="#b0101a"/>
<rect x="502" y="349" width="3" height="4" fill="#dc0a14"/>
<rect x="507" y="352" width="1" height="6" fill="#b0101a"/>
<rect x="506" y="352" width="3" height="3" fill="#dc0a14"/>
<rect x="512" y="354" width="1" height="12" fill="#b0101a"/>
<rect x="511" y="354" width="3" height="10" fill="#dc0a14"/>
<rect x="517" y="364" width="1" height="13" fill="#b0101a"/>
<rect x="516" y="364" width="3" height="13" fill="#dc0a14"/>
<rect x="522" y="366" width="1" height="31" fill="#b0101a"/>
<rect x="521" y="376" width="3" height="3" fill="#dc0a14"/>
<rect x="527" y="362" width="1" height="20" fill="#1e841e"/>
<rect x="526.5" y="370.5" width="2" height="8" fill="#fff" stroke="#1e841e" stroke-width="1"/>
<rect x="531" y="370" width="3" height="1" fill="#2e6e2e"/>
<rect x="536" y="366" width="3" height="1" fill="#2e6e2e"/>
<rect x="542" y="325" width="1" height="41" fill="#1e841e"/>
<rect x="541.5" y="329.5" width="2" height="36" fill="#fff" stroke="#1e841e" stroke-width="1"/>
<rect x="547" y="300" width="1" height="30" fill="#1e841e"/>
<rect x="546.5" y="303.5" width="2" height="25" fill="#fff" stroke="#1e841e" stroke-width="1"/>
<rect x="552" y="301" width="1" height="10" fill="#1e841e"/>
<rect x="551" y="305" width="3" height="2" fill="#1e841e"/>
<rect x="557" y="294" width="1" height="13" fill="#1e841e"/>
<rect x="556.5" y="298.5" width="2" height="5" fill="#fff" stroke="#1e841e" stroke-width="1"/>
<rect x="562" y="285" width="1" height="14" fill="#1e841e"/>
<rect x="561.5" y="291.5" width="2" height="6" fill="#fff" stroke="#1e841e" stroke-width="1"/>
<rect x="567" y="289" width="1" height="7" fill="#1e841e"/>
<rect x="566" y="290" width="3" height="2" fill="#1e841e"/>
<rect x="572" y="265" width="1" height="28" fill="#1e841e"/>
<rect x="571.5" y="269.5" width="2" height="23" fill="#fff" stroke="#1e841e" stroke-width="1"/>
<rect x="577" y="265" width="1" height="23" fill="#b0101a"/>
<rect x="576" y="268" width="3" height="12" fill="#dc0a14"/>
<rect x="581" y="280" width="3" height="1" fill="#2e6e2e"/>
<rect x="587" y="281" width="1" height="5" fill="#b0101a"/>
<rect x="586" y="281" width="3" height="5" fill="#dc0a14"/>
<rect x="592" y="273" width="1" height="27" fill="#1e841e"/>
<rect x="591.5" y="277.5" width="2" height="10" fill="#fff" stroke="#1e841e" stroke-width="1"/>
<rect x="597" y="277" width="1" height="20" fill="#b0101a"/>
<rect x="596" y="277" width="3" height="15" fill="#dc0a14"/>
<rect x="602" y="289" width="1" height="7" fill="#b0101a"/>
<rect x="601" y="292" width="3" height="2" fill="#dc0a14"/>
<rect x="607" y="290" width="1" height="18" fill="#b0101a"/>
<rect x="606" y="291" width="3" height="12" fill="#dc0a14"/>
<rect x="612" y="294" width="1" height="9" fill="#b0101a"/>
<rect x="611" y="299" width="3" height="2" fill="#dc0a14"/>
<rect x="617" y="290" width="1" height="9" fill="#1e841e"/>
<rect x="616.5" y="291.5" width="2" height="7" fill="#fff" stroke="#1e841e" stroke-width="1"/>
<rect x="622" y="290" width="1" height="7" fill="#b0101a"/>
<rect x="621" y="292" width="3" height="1" fill="#dc0a14"/>
<rect x="627" y="289" width="1" height="23" fill="#b0101a"/>
<rect x="626" y="294" width="3" height="18" fill="#dc0a14"/>
<rect x="631" y="311" width="3" height="1" fill="#2e6e2e"/>
<rect x="637" y="307" width="1" height="3" fill="#1e841e"/>
<rect x="636" y="309" width="3" height="1" fill="#1e841e"/>
<rect x="642" y="298" width="1" height="20" fill="#1e841e"/>
<rect x="641.5" y="307.5" width="2" height="2" fill="#fff" stroke="#1e841e" stroke-width="1"/>
<rect x="647" y="307" width="1" height="5" fill="#1e841e"/>
<rect x="646" y="309" width="3" height="1" fill="#1e841e"/>
<rect x="652" y="307" width="1" height="13" fill="#b0101a"/>
<rect x="651" y="310" width="3" height="2" fill="#dc0a14"/>
<rect x="657" y="307" width="1" height="9" fill="#1e841e"/>
<rect x="656" y="310" width="3" height="2" fill="#1e841e"/>
<rect x="662" y="304" width="1" height="12" fill="#b0101a"/>
<rect x="661" y="310" width="3" height="4" fill="#dc0a14"/>
<rect x="666" y="312" width="1" height="19" fill="#b0101a"/>
<rect x="665" y="314" width="3" height="17" fill="#dc0a14"/>
<rect x="671" y="329" width="1" height="13" fill="#b0101a"/>
<rect x="670" y="330" width="3" height="5" fill="#dc0a14"/>
<rect x="676" y="329" width="1" height="15" fill="#1e841e"/>
<rect x="675.5" y="329.5" width="2" height="5" fill="#fff" stroke="#1e841e" stroke-width="1"/>
<rect x="680" y="329" width="3" height="1" fill="#2e6e2e"/>
<rect x="685" y="337" width="3" height="1" fill="#2e6e2e"/>
<rect x="691" y="325" width="1" height="19" fill="#1e841e"/>
<rect x="690.5" y="331.5" width="2" height="7" fill="#fff" stroke="#1e841e" stroke-width="1"/>
<rect x="696" y="327" width="1" height="6" fill="#1e841e"/>
<rect x="695.5" y="329.5" width="2" height="3" fill="#fff" stroke="#1e841e" stroke-width="1"/>
<rect x="701" y="327" width="1" height="8" fill="#b0101a"/>
<rect x="700" y="329" width="3" height="2" fill="#dc0a14"/>
<rect x="706" y="327" width="1" height="5" fill="#1e841e"/>
<rect x="705" y="329" width="3" height="1" fill="#1e841e"/>
<rect x="711" y="319" width="1" height="11" fill="#1e841e"/>
<rect x="710.5" y="326.5" width="2" height="2" fill="#fff" stroke="#1e841e" stroke-width="1"/>
<rect x="716" y="317" width="1" height="13" fill="#1e841e"/>
<rect x="715.5" y="320.5" width="2" height="6" fill="#fff" stroke="#1e841e" stroke-width="1"/>
<rect x="721" y="310" width="1" height="10" fill="#1e841e"/>
<rect x="720.5" y="315.5" width="2" height="4" fill="#fff" stroke="#1e841e" stroke-width="1"/>
<rect x="726" y="312" width="1" height="7" fill="#1e841e"/>
<rect x="725" y="314" width="3" height="2" fill="#1e841e"/>
<rect x="730" y="314" width="3" height="1" fill="#2e6e2e"/>
<rect x="735" y="310" width="3" height="1" fill="#2e6e2e"/>
<rect x="741" y="305" width="1" height="18" fill="#b0101a"/>
<rect x="740" y="311" width="3" height="6" fill="#dc0a14"/>
<rect x="746" y="299" width="1" height="18" fill="#1e841e"/>
<rect x="745.5" y="305.5" width="2" height="11" fill="#fff" stroke="#1e841e" stroke-width="1"/>
<rect x="751" y="305" width="1" height="11" fill="#b0101a"/>
<rect x="750" y="305" width="3" height="7" fill="#dc0a14"/>
<rect x="756" y="307" width="1" height="9" fill="#1e841e"/>
<rect x="755.5" y="310.5" width="2" height="2" fill="#fff" stroke="#1e841e" stroke-width="1"/>
<rect x="761" y="307" width="1" height="9" fill="#b0101a"/>
<rect x="760" y="309" width="3" height="5" fill="#dc0a14"/>
<rect x="766" y="311" width="1" height="9" fill="#1e841e"/>
<rect x="765" y="313" width="3" height="1" fill="#1e841e"/>
<rect x="771" y="309" width="1" height="9" fill="#1e841e"/>
<rect x="770.5" y="309.5" width="2" height="4" fill="#fff" stroke="#1e841e" stroke-width="1"/>
<rect x="776" y="309" width="1" height="9" fill="#b0101a"/>
<rect x="775" y="309" width="3" height="9" fill="#dc0a14"/>
<rect x="780" y="317" width="3" height="1" fill="#2e6e2e"/>
<rect x="785" y="312" width="3" height="1" fill="#2e6e2e"/>
<rect x="791" y="306" width="1" height="10" fill="#b0101a"/>
<rect x="790" y="311" width="3" height="3" fill="#dc0a14"/>
<rect x="796" y="307" width="1" height="9" fill="#1e841e"/>
<rect x="795.5" y="311.5" width="2" height="2" fill="#fff" stroke="#1e841e" stroke-width="1"/>
<rect x="801" y="310" width="1" height="6" fill="#b0101a"/>
<rect x="800" y="311" width="3" height="5" fill="#dc0a14"/>
<rect x="806" y="315" width="1" height="16" fill="#b0101a"/>
<rect x="805" y="315" width="3" height="12" fill="#dc0a14"/>
<rect x="811" y="320" width="1" height="15" fill="#1e841e"/>
<rect x="810.5" y="323.5" width="2" height="4" fill="#fff" stroke="#1e841e" stroke-width="1"/>
<rect x="816" y="322" width="1" height="16" fill="#b0101a"/>
<rect x="815" y="324" width="3" height="14" fill="#dc0a14"/>
<rect x="821" y="329" width="1" height="15" fill="#b0101a"/>
<rect x="820" y="337" width="3" height="1" fill="#dc0a14"/>
<rect x="826" y="338" width="1" height="8" fill="#b0101a"/>
<rect x="825" y="338" width="3" height="8" fill="#dc0a14"/>
<rect x="829" y="345" width="3" height="1" fill="#2e6e2e"/>
<rect x="834" y="332" width="3" height="1" fill="#2e6e2e"/>
<rect x="840" y="322" width="1" height="24" fill="#1e841e"/>
<rect x="839.5" y="327.5" width="2" height="5" fill="#fff" stroke="#1e841e" stroke-width="1"/>
<rect x="845" y="327" width="1" height="17" fill="#b0101a"/>
<rect x="844" y="328" width="3" height="13" fill="#dc0a14"/>
<rect x="850" y="337" width="1" height="20" fill="#b0101a"/>
<rect x="849" y="340" width="3" height="7" fill="#dc0a14"/>
<rect x="855" y="334" width="1" height="18" fill="#1e841e"/>
<rect x="854.5" y="342.5" width="2" height="5" fill="#fff" stroke="#1e841e" stroke-width="1"/>
<rect x="860" y="333" width="1" height="11" fill="#1e841e"/>
<rect x="859.5" y="334.5" width="2" height="5" fill="#fff" stroke="#1e841e" stroke-width="1"/>
<rect x="865" y="333" width="1" height="10" fill="#b0101a"/>
<rect x="864" y="333" width="3" height="4" fill="#dc0a14"/>
<rect x="870" y="329" width="1" height="19" fill="#1e841e"/>
<rect x="869.5" y="334.5" width="2" height="2" fill="#fff" stroke="#1e841e" stroke-width="1"/>
<rect x="875" y="333" width="1" height="11" fill="#b0101a"/>
<rect x="874" y="334" width="3" height="5" fill="#dc0a14"/>
<rect x="879" y="340" width="3" height="1" fill="#2e6e2e"/>
<rect x="885" y="335" width="1" height="16" fill="#b0101a"/>
<rect x="884" y="338" width="3" height="8" fill="#dc0a14"/>
<rect x="890" y="343" width="1" height="11" fill="#b0101a"/>
<rect x="889" y="345" width="3" height="2" fill="#dc0a14"/>
<rect x="895" y="342" width="1" height="6" fill="#1e841e"/>
<rect x="894" y="347" width="3" height="1" fill="#1e841e"/>
<rect x="900" y="343" width="1" height="5" fill="#1e841e"/>
<rect x="899" y="345" width="3" height="2" fill="#1e841e"/>
<rect x="905" y="345" width="1" height="9" fill="#b0101a"/>
<rect x="904" y="345" width="3" height="7" fill="#dc0a14"/>
<rect x="910" y="350" width="1" height="11" fill="#b0101a"/>
<rect x="909" y="351" width="3" height="10" fill="#dc0a14"/>
<rect x="915" y="359" width="1" height="17" fill="#b0101a"/>
<rect x="914" y="360" width="3" height="4" fill="#dc0a14"/>
<rect x="920" y="355" width="1" height="20" fill="#b0101a"/>
<rect x="919" y="363" width="3" height="12" fill="#dc0a14"/>
<rect x="924" y="374" width="3" height="1" fill="#2e6e2e"/>
<rect x="929" y="370" width="3" height="1" fill="#2e6e2e"/>
<rect x="935" y="346" width="1" height="24" fill="#1e841e"/>
<rect x="934.5" y="355.5" width="2" height="6" fill="#fff" stroke="#1e841e" stroke-width="1"/>
<rect x="940" y="353" width="1" height="7" fill="#b0101a"/>
<rect x="939" y="357" width="3" height="3" fill="#dc0a14"/>
<rect x="945" y="359" width="1" height="8" fill="#b0101a"/>
<rect x="944" y="359" width="3" height="8" fill="#dc0a14"/>
<rect x="950" y="364" width="1" height="10" fill="#b0101a"/>
<rect x="949" y="366" width="3" height="8" fill="#dc0a14"/>
<rect x="955" y="369" width="1" height="9" fill="#1e841e"/>
<rect x="954" y="372" width="3" height="1" fill="#1e841e"/>
<rect x="960" y="367" width="1" height="10" fill="#b0101a"/>
<rect x="959" y="372" width="3" height="5" fill="#dc0a14"/>
<rect x="965" y="365" width="1" height="15" fill="#b0101a"/>
<rect x="964" y="376" width="3" height="4" fill="#dc0a14"/>
<rect x="970" y="370" width="1" height="17" fill="#1e841e"/>
<rect x="969.5" y="374.5" width="2" height="5" fill="#fff" stroke="#1e841e" stroke-width="1"/>
<rect x="974" y="374" width="3" height="1" fill="#2e6e2e"/>
<rect x="979" y="351" width="3" height="1" fill="#2e6e2e"/>
<rect x="985" y="343" width="1" height="28" fill="#b0101a"/>
<rect x="984" y="351" width="3" height="13" fill="#dc0a14"/>
<rect x="989" y="362" width="1" height="9" fill="#b0101a"/>
<rect x="988" y="362" width="3" height="2" fill="#dc0a14"/>
<rect x="994" y="363" width="1" height="17" fill="#b0101a"/>
<rect x="993" y="363" width="3" height="7" fill="#dc0a14"/>
<rect x="999" y="365" width="1" height="7" fill="#1e841e"/>
<rect x="998.5" y="366.5" width="2" height="4" fill="#fff" stroke="#1e841e" stroke-width="1"/>
<rect x="1004" y="348" width="1" height="22" fill="#1e841e"/>
<rect x="1003.5" y="358.5" width="2" height="7" fill="#fff" stroke="#1e841e" stroke-width="1"/>
<rect x="1009" y="357" width="1" height="8" fill="#b0101a"/>
<rect x="1008" y="358" width="3" height="7" fill="#dc0a14"/>
<rect x="1014" y="344" width="1" height="22" fill="#1e841e"/>
<rect x="1013.5" y="347.5" width="2" height="16" fill="#fff" stroke="#1e841e" stroke-width="1"/>
<rect x="1019" y="338" width="1" height="13" fill="#1e841e"/>
<rect x="1018" y="347" width="3" height="1" fill="#1e841e"/>
<rect x="1023" y="347" width="3" height="1" fill="#2e6e2e"/>
<rect x="1028" y="338" width="3" height="1" fill="#2e6e2e"/>
<rect x="1034" y="336" width="1" height="15" fill="#b0101a"/>
<rect x="1033" y="337" width="3" height="6" fill="#dc0a14"/>
<rect x="1039" y="339" width="1" height="10" fill="#b0101a"/>
<rect x="1038" y="342" width="3" height="4" fill="#dc0a14"/>
<rect x="1044" y="344" width="1" height="16" fill="#b0101a"/>
<rect x="1043" y="345" width="3" height="4" fill="#dc0a14"/>
<rect x="1049" y="345" width="1" height="11" fill="#b0101a"/>
<rect x="1048" y="348" width="3" height="7" fill="#dc0a14"/>
<rect x="1054" y="349" width="1" height="17" fill="#b0101a"/>
<rect x="1053" y="355" width="3" height="6" fill="#dc0a14"/>
<rect x="1059" y="360" width="1" height="15" fill="#b0101a"/>
<rect x="1058" y="362" width="3" height="3" fill="#dc0a14"/>
<rect x="1064" y="353" width="1" height="12" fill="#1e841e"/>
<rect x="1063.5" y="358.5" width="2" height="6" fill="#fff" stroke="#1e841e" stroke-width="1"/>
<rect x="1069" y="358" width="1" height="10" fill="#b0101a"/>
<rect x="1068" y="358" width="3" height="5" fill="#dc0a14"/>
<rect x="1073" y="362" width="3" height="1" fill="#2e6e2e"/>
<rect x="1078" y="370" width="3" height="1" fill="#2e6e2e"/>
<rect x="1084" y="356" width="1" height="18" fill="#b0101a"/>
<rect x="1083" y="365" width="3" height="9" fill="#dc0a14"/>
<rect x="1089" y="359" width="1" height="14" fill="#1e841e"/>
<rect x="1088.5" y="364.5" width="2" height="8" fill="#fff" stroke="#1e841e" stroke-width="1"/>
<rect x="1094" y="362" width="1" height="8" fill="#1e841e"/>
<rect x="1093" y="363" width="3" height="1" fill="#1e841e"/>
<rect x="1099" y="362" width="1" height="5" fill="#1e841e"/>
<rect x="1098" y="362" width="3" height="2" fill="#1e841e"/>
<rect x="1104" y="362" width="1" height="8" fill="#b0101a"/>
<rect x="1103" y="362" width="3" height="8" fill="#dc0a14"/>
<rect x="1109" y="365" width="1" height="13" fill="#b0101a"/>
<rect x="1108" y="367" width="3" height="5" fill="#dc0a14"/>
<rect x="1114" y="365" width="1" height="15" fill="#b0101a"/>
<rect x="1113" y="371" width="3" height="3" fill="#dc0a14"/>
<rect x="1119" y="356" width="1" height="21" fill="#1e841e"/>
<rect x="1118.5" y="362.5" width="2" height="13" fill="#fff" stroke="#1e841e" stroke-width="1"/>
<rect x="1123" y="358" width="3" height="1" fill="#2e6e2e"/>
<rect x="1129" y="358" width="1" height="12" fill="#b0101a"/>
<rect x="1128" y="358" width="3" height="4" fill="#dc0a14"/>
<rect x="1134" y="361" width="1" height="9" fill="#b0101a"/>
<rect x="1133" y="361" width="3" height="5" fill="#dc0a14"/>
<rect x="1139" y="364" width="1" height="5" fill="#1e841e"/>
<rect x="1138" y="364" width="3" height="2" fill="#1e841e"/>
<rect x="1144" y="363" width="1" height="9" fill="#b0101a"/>
<rect x="1143" y="364" width="3" height="7" fill="#dc0a14"/>
<rect x="1148" y="365" width="1" height="5" fill="#1e841e"/>
<rect x="1147" y="370" width="3" height="1" fill="#1e841e"/>
<rect x="1153" y="364" width="1" height="12" fill="#1e841e"/>
<rect x="1152.5" y="365.5" width="2" height="3" fill="#fff" stroke="#1e841e" stroke-width="1"/>
<rect x="1158" y="364" width="1" height="7" fill="#b0101a"/>
<rect x="1157" y="365" width="3" height="3" fill="#dc0a14"/>
<rect x="1163" y="363" width="1" height="7" fill="#1e841e"/>
<rect x="1162" y="364" width="3" height="1" fill="#1e841e"/>
<rect x="1167" y="364" width="3" height="1" fill="#2e6e2e"/>
<rect x="1173" y="413" width="1" height="18" fill="#b0101a"/>
<rect x="1172" y="413" width="3" height="18" fill="#dc0a14"/>
<rect x="1178" y="391" width="1" height="49" fill="#1e841e"/>
<rect x="1177.5" y="400.5" width="2" height="27" fill="#fff" stroke="#1e841e" stroke-width="1"/>
<rect x="1183" y="396" width="1" height="16" fill="#b0101a"/>
<rect x="1182" y="400" width="3" height="2" fill="#dc0a14"/>
<rect x="1188" y="392" width="1" height="13" fill="#1e841e"/>
<rect x="1187.5" y="398.5" width="2" height="4" fill="#fff" stroke="#1e841e" stroke-width="1"/>
<rect x="1193" y="396" width="1" height="11" fill="#b0101a"/>
<rect x="1192" y="398" width="3" height="6" fill="#dc0a14"/>
<rect x="1198" y="403" width="1" height="14" fill="#b0101a"/>
<rect x="1197" y="403" width="3" height="11" fill="#dc0a14"/>
<rect x="1203" y="403" width="1" height="14" fill="#1e841e"/>
<rect x="1202.5" y="405.5" width="2" height="8" fill="#fff" stroke="#1e841e" stroke-width="1"/>
<rect x="1208" y="402" width="1" height="12" fill="#b0101a"/>
<rect x="1207" y="405" width="3" height="7" fill="#dc0a14"/>
<rect x="1213" y="410" width="1" height="18" fill="#b0101a"/>
<rect x="1212" y="411" width="3" height="12" fill="#dc0a14"/>
<rect x="1217" y="422" width="3" height="1" fill="#2e6e2e"/>
<rect x="1222" y="422" width="3" height="1" fill="#2e6e2e"/>
<rect x="1228" y="408" width="1" height="22" fill="#b0101a"/>
<rect x="1227" y="423" width="3" height="4" fill="#dc0a14"/>
<rect x="1233" y="426" width="1" height="38" fill="#b0101a"/>
<rect x="1232" y="426" width="3" height="24" fill="#dc0a14"/>
<rect x="1238" y="431" width="1" height="19" fill="#1e841e"/>
<rect x="1237.5" y="440.5" width="2" height="9" fill="#fff" stroke="#1e841e" stroke-width="1"/>
<rect x="1243" y="431" width="1" height="11" fill="#1e841e"/>
<rect x="1242.5" y="434.5" width="2" height="5" fill="#fff" stroke="#1e841e" stroke-width="1"/>
</g>
<line x1="523" y1="398.5" x2="1323" y2="398.5" stroke="#cc2030" stroke-width="1.9"/></svg>
<div class="yl" style="top:136.2px">125,00</div>
<div class="yl" style="top:212.2px">120,00</div>
<div class="yl" style="top:291.2px">115,00</div>
<div class="yl" style="top:374.2px">110,00</div>
<div class="yl" style="top:460.2px">105,00</div>
<div class="yl" style="top:582.2px">100 000</div>
<div class="yl" style="top:562.2px">200 000</div>
<div class="yl" style="top:543.2px">300 000</div>
<div class="yl" style="top:523.2px">400 000</div>
<div class="yl" style="top:504.2px">500 000</div>
<div class="xl" style="left:6.3px">26.05.2015</div>
<div class="xl" style="left:150.2px">29.05.2015</div>
<div class="xl" style="left:300.3px">03.06.2015</div>
<div class="xl" style="left:399.3px">08.06.2015</div>
<div class="xl" style="left:548.2px">11.06.2015</div>
<div class="xl" style="left:697.3px">16.06.2015</div>
<div class="xl" style="left:841.2px">19.06.2015</div>
<div class="xl" style="left:990.3px">24.06.2015</div>
<div class="xl" style="left:1134.3px">29.06.2015</div>
<div id="legend"><span style="position:absolute;left:3px;top:6px;width:10px;height:1px;background:#1f8a1f"></span><span style="position:absolute;left:16px;top:0">KGHM</span></div>
<div class="tip" style="left:10px;top:118px;width:353px;height:15px">KGHM [Otw.: 106,50  Max.: 106,95  Min.: 106,40  Zamk.: 106,75] (+0,3%)</div>
<div class="tip" style="left:10px;top:486px;width:116px;height:15px">VOL - Volume [27 026]</div>
<div class="abs" style="left:1321px;top:488px;width:16px;height:15px;border:1px solid #bbb;border-radius:8px;background:#f4f4f4"><svg width="14" height="14" style="position:absolute;left:1px;top:0"><path d="M4 3.5 L10 10 M10 3.5 L4 10" stroke="#c01020" stroke-width="1.8"/></svg></div>
<div class="abs" style="left:1321px;top:504px;width:16px;height:15px;border:1px solid #bbb;border-radius:8px;background:#f4f4f4"><svg width="14" height="14" style="position:absolute;left:1px;top:0"><circle cx="7.5" cy="6.5" r="4" fill="none" stroke="#600010" stroke-width="1.5"/><circle cx="8" cy="6.5" r="2" fill="#600010"/></svg></div>
</div></body></html>
